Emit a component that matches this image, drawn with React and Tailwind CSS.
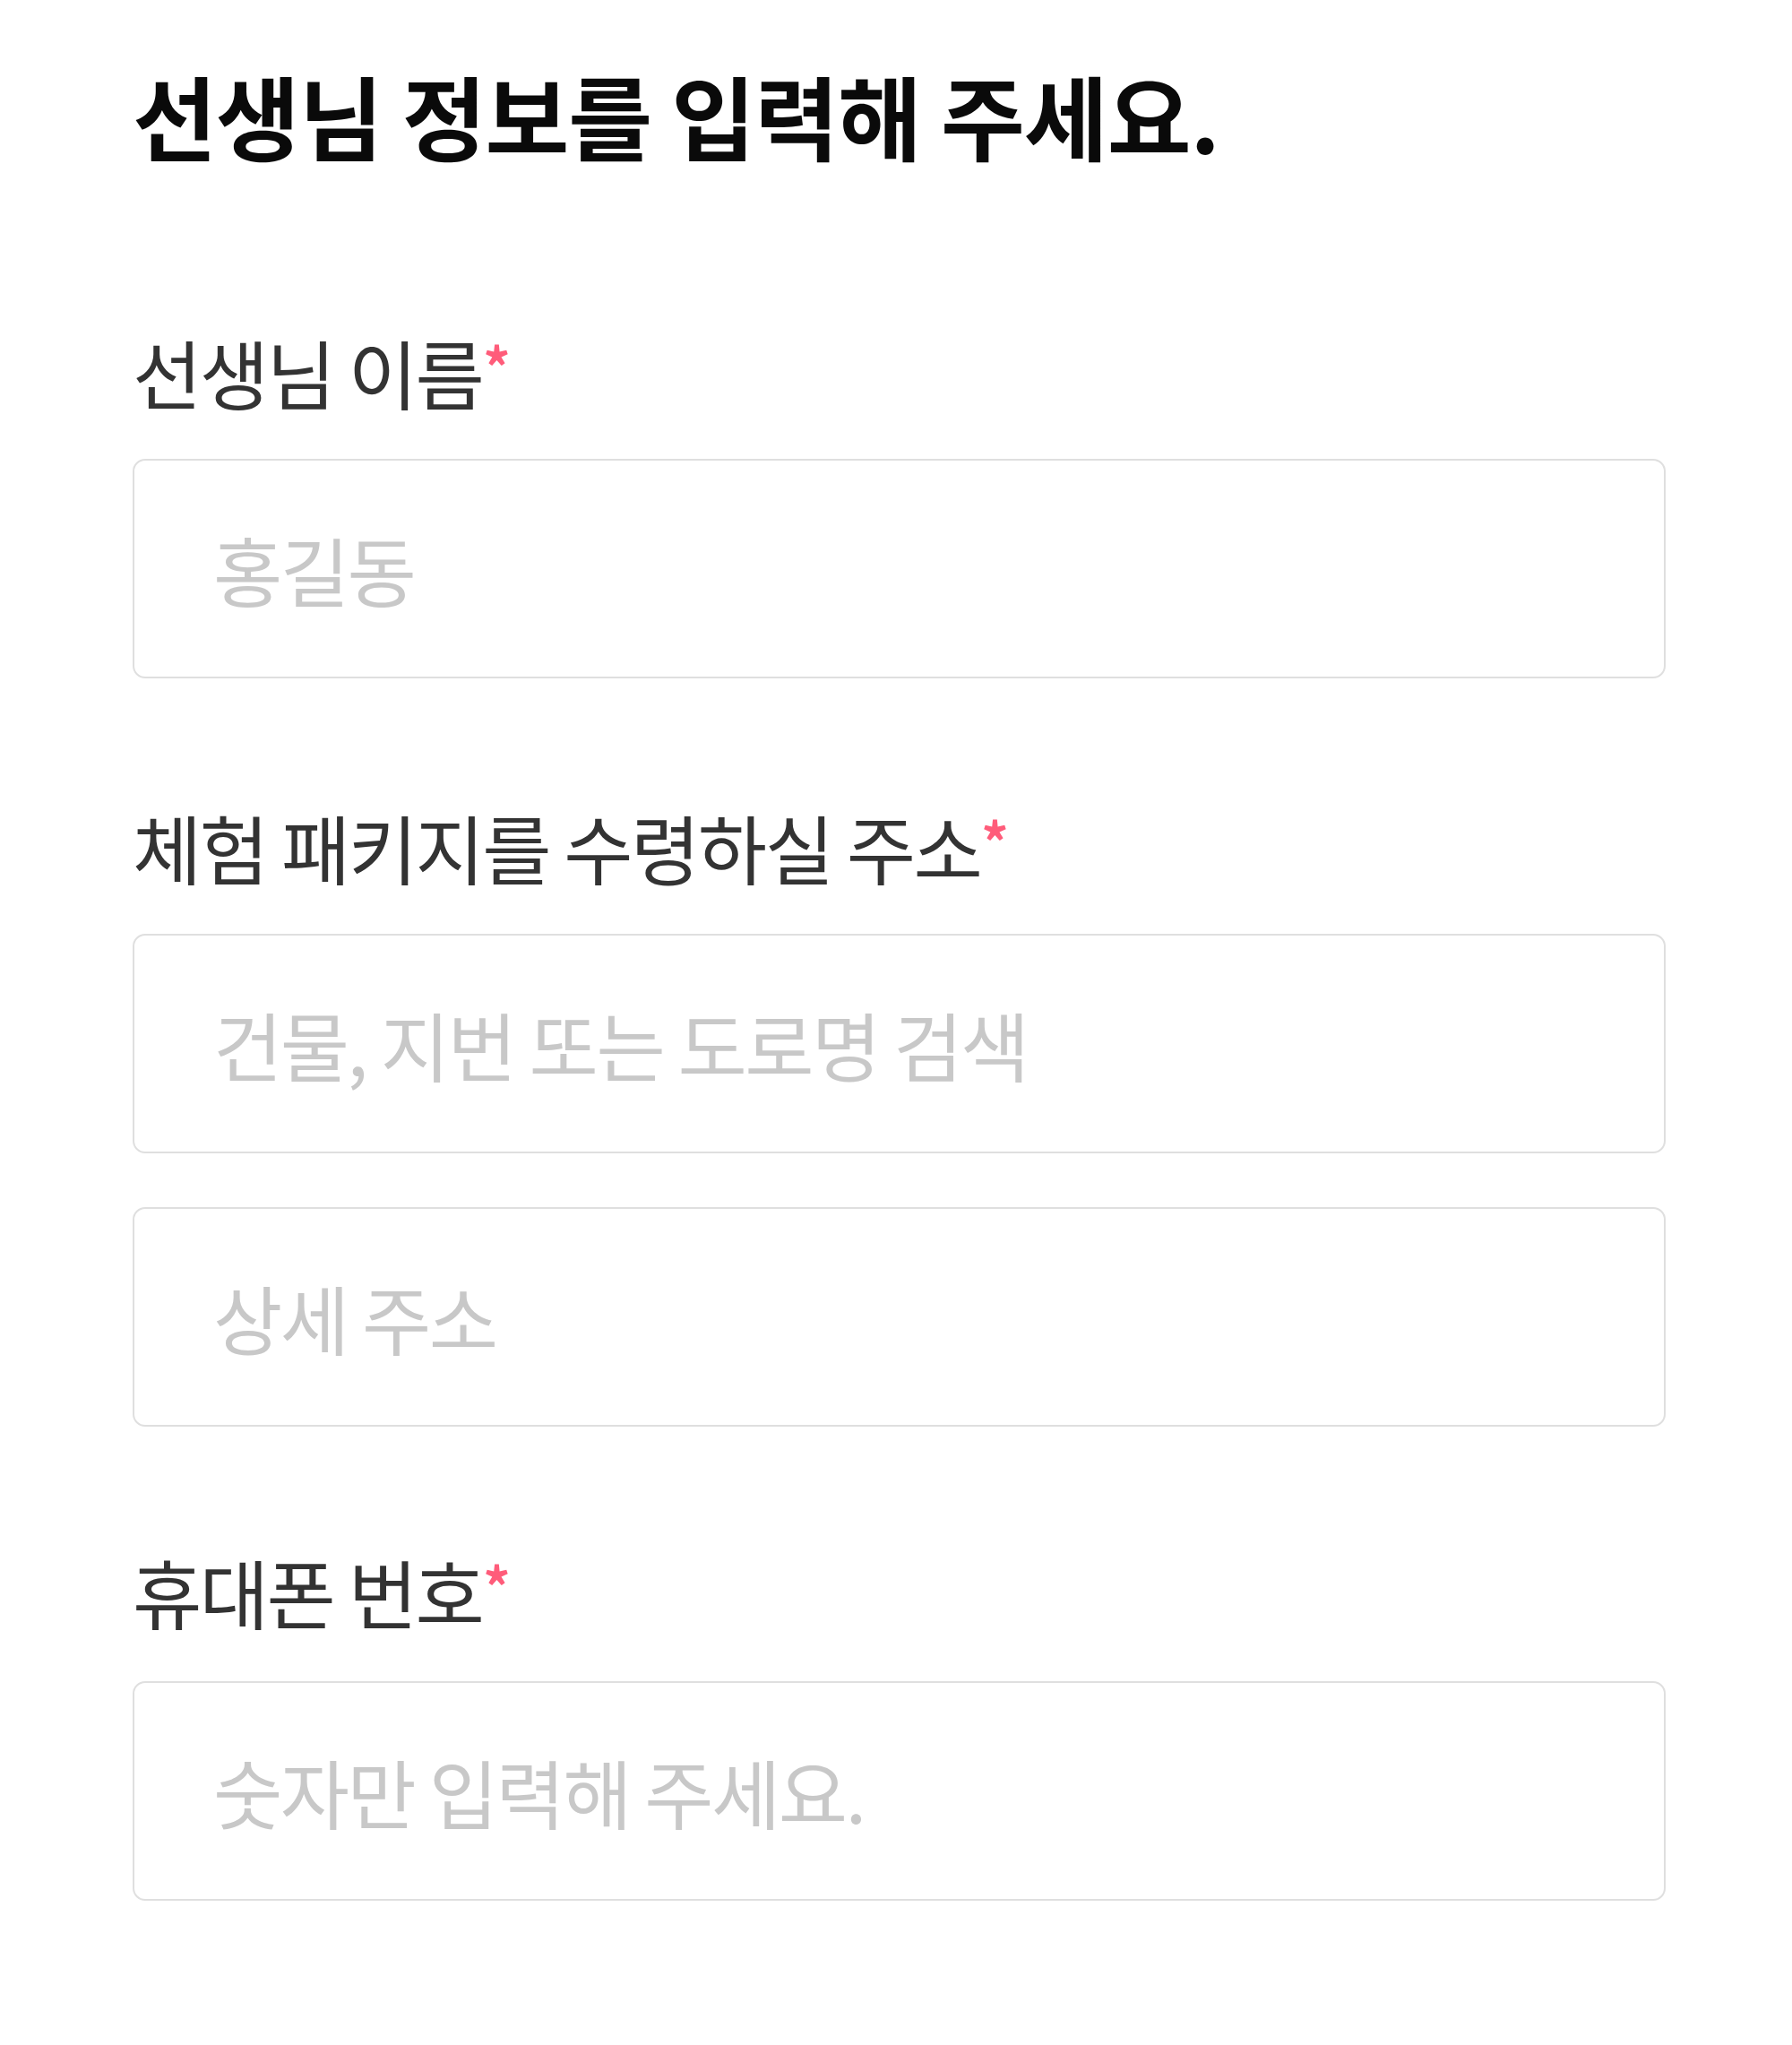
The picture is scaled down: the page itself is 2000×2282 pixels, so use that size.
import React from "react";

const font = { fontFamily: '"Noto Sans CJK KR", "Noto Sans", sans-serif' };

function Label({ children, className = "" }) {
  return (
    <label className={`block text-[84px] leading-[84px] tracking-[-2.5px] text-[#333333] ${className}`}>
      {children}
      <span className="inline-block align-top ml-[1px] mt-[4px] text-[60px] leading-[60px] font-bold tracking-normal text-[#ff5c7a]">*</span>
    </label>
  );
}

function Field({ placeholder, className = "" }) {
  return (
    <input
      type="text"
      placeholder={placeholder}
      className={`block w-full h-[245px] rounded-[14px] border-2 border-[#dfdfdf] bg-white px-[88px] text-[84px] tracking-[-2.5px] text-[#333333] outline-none placeholder:text-[#c8c8c8] ${className}`}
      style={font}
    />
  );
}

export default function App() {
  return (
    <div className="w-[2000px] min-h-[2282px] bg-white pl-[148px] pt-[77px]" style={font}>
      <div className="w-[1711px]">
        <h1 className="text-[102px] leading-[102px] font-bold tracking-[-1px] text-[#0a0a0a]">
          선생님 정보를 입력해 주세요.
        </h1>

        <Label className="mt-[194px]">선생님 이름</Label>
        <Field className="mt-[55px]" placeholder="홍길동" />

        <Label className="mt-[146px]">체험 패키지를 수령하실 주소</Label>
        <Field className="mt-[55px]" placeholder="건물, 지번 또는 도로명 검색" />
        <Field className="mt-[60px]" placeholder="상세 주소" />

        <Label className="mt-[142px]">휴대폰 번호</Label>
        <Field className="mt-[58px]" placeholder="숫자만 입력해 주세요." />
      </div>
    </div>
  );
}
